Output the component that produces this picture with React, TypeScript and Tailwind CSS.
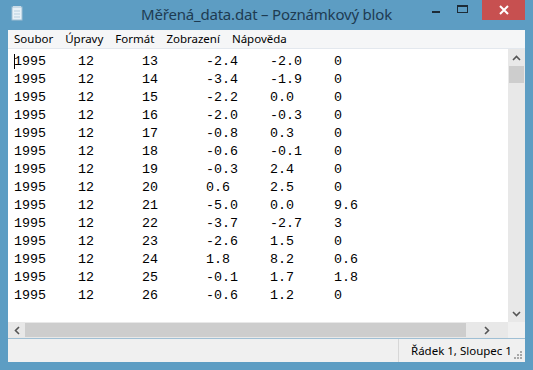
const rows = [
  ["1995", "12", "13", "-2.4", "-2.0", "0"],
  ["1995", "12", "14", "-3.4", "-1.9", "0"],
  ["1995", "12", "15", "-2.2", "0.0", "0"],
  ["1995", "12", "16", "-2.0", "-0.3", "0"],
  ["1995", "12", "17", "-0.8", "0.3", "0"],
  ["1995", "12", "18", "-0.6", "-0.1", "0"],
  ["1995", "12", "19", "-0.3", "2.4", "0"],
  ["1995", "12", "20", "0.6", "2.5", "0"],
  ["1995", "12", "21", "-5.0", "0.0", "9.6"],
  ["1995", "12", "22", "-3.7", "-2.7", "3"],
  ["1995", "12", "23", "-2.6", "1.5", "0"],
  ["1995", "12", "24", "1.8", "8.2", "0.6"],
  ["1995", "12", "25", "-0.1", "1.7", "1.8"],
  ["1995", "12", "26", "-0.6", "1.2", "0"],
];

const menu = ["Soubor", "Úpravy", "Formát", "Zobrazení", "Nápověda"];

function NotepadIcon() {
  return (
    <svg width="16" height="16" viewBox="0 0 16 16">
      <rect x="3" y="2" width="10" height="13" fill="#e8f1f7" stroke="#9fbfd4" />
      <rect x="4" y="1" width="8" height="2" fill="#c9dbe7" />
      <line x1="5" y1="6" x2="11" y2="6" stroke="#b7cfdf" />
      <line x1="5" y1="9" x2="11" y2="9" stroke="#b7cfdf" />
      <line x1="5" y1="12" x2="11" y2="12" stroke="#b7cfdf" />
    </svg>
  );
}

export default function App() {
  return (
    <div className="w-[533px] h-[370px] bg-[#5d9dc3] flex flex-col overflow-hidden font-['Noto_Sans',sans-serif]">
      {/* title bar */}
      <div className="h-[30px] flex items-start relative">
        <div className="pl-[9px] pt-[5px]">
          <NotepadIcon />
        </div>
        <div className="absolute left-0 right-0 top-[4px] text-center text-[15px] tracking-[-0.2px] text-[#1d3b52] leading-[20px]">
          Měřená_data.dat – Poznámkový blok
        </div>
        <div className="ml-auto flex items-start h-[20px]">
          <div className="w-[26px] h-[20px] flex items-center justify-center">
            <div className="w-[8px] h-[2px] bg-[#1d2b36] mt-[4px]" />
          </div>
          <div className="w-[26px] h-[20px] flex items-center justify-center">
            <div className="w-[11px] h-[8px] border border-[#1d2b36] border-t-2 -mt-[3px]" />
          </div>
          <div className="w-[43px] h-[20px] bg-[#c75050] flex items-center justify-center mr-[8px] ml-[7px]">
            <svg width="10" height="10" viewBox="0 0 10 10">
              <path d="M1 1L9 9M9 1L1 9" stroke="#fff" strokeWidth="2" />
            </svg>
          </div>
        </div>
      </div>

      {/* client */}
      <div className="mx-[8px] flex-1 flex flex-col bg-[#f0f0f0]">
        {/* menu */}
        <div className="h-[19px] bg-[#f5f6f7] border-b border-[#e3e8ee] flex items-center text-[11.5px] text-black pl-[6px] gap-[12px]">
          {menu.map((m) => (
            <span key={m}>{m}</span>
          ))}
        </div>

        {/* edit + vscroll */}
        <div className="flex flex-1 bg-white">
          <div className="flex-1 relative pt-[4px] pl-[6px] font-['Liberation_Mono',monospace] text-[13.33px] leading-[18px] text-black whitespace-pre [tab-size:8]">
            <div className="absolute left-[6px] top-[5px] w-px h-[15px] bg-black" />
            {rows.map((r, i) => (
              <div key={i}>{r.join("\t")}</div>
            ))}
          </div>
          <div className="w-[17px] bg-[#e8e8e8] flex flex-col items-center">
            <div className="h-[17px] flex items-center justify-center">
              <svg width="9" height="6" viewBox="0 0 9 6">
                <path d="M1 5L4.5 1.5L8 5" stroke="#555" strokeWidth="1.6" fill="none" />
              </svg>
            </div>
            <div className="w-[15px] h-[17px] bg-[#cdcdcd]" />
            <div className="flex-1" />
            <div className="h-[17px] flex items-center justify-center">
              <svg width="9" height="6" viewBox="0 0 9 6">
                <path d="M1 1L4.5 4.5L8 1" stroke="#555" strokeWidth="1.6" fill="none" />
              </svg>
            </div>
          </div>
        </div>

        {/* hscroll */}
        <div className="h-[16px] flex bg-[#e8e8e8]">
          <div className="w-[17px] flex items-center justify-center">
            <svg width="6" height="9" viewBox="0 0 6 9">
              <path d="M5 1L1.5 4.5L5 8" stroke="#555" strokeWidth="1.6" fill="none" />
            </svg>
          </div>
          <div className="w-[441px] my-[1px] bg-[#cdcdcd]" />
          <div className="flex-1 flex items-center justify-center">
            <svg width="6" height="9" viewBox="0 0 6 9">
              <path d="M1 1L4.5 4.5L1 8" stroke="#555" strokeWidth="1.6" fill="none" />
            </svg>
          </div>
          <div className="w-[17px] bg-[#f0f0f0]" />
        </div>

        {/* status bar */}
        <div className="h-[24px] border-t border-[#9fbfd4] bg-[#f0f0f0] flex items-center text-[11.5px] text-black">
          <div className="flex-1" />
          <div className="h-full border-l border-[#d7d7d7] w-[1px]" />
          <div className="w-[115px] pl-[12px]">Řádek 1, Sloupec 1</div>
          <div className="self-end mb-[3px] mr-[3px] grid grid-cols-3 gap-[1px] w-[8px]">
            <span />
            <span />
            <span className="w-[2px] h-[2px] bg-[#a8a8a8]" />
            <span />
            <span className="w-[2px] h-[2px] bg-[#a8a8a8]" />
            <span className="w-[2px] h-[2px] bg-[#a8a8a8]" />
            <span className="w-[2px] h-[2px] bg-[#a8a8a8]" />
            <span className="w-[2px] h-[2px] bg-[#a8a8a8]" />
            <span className="w-[2px] h-[2px] bg-[#a8a8a8]" />
          </div>
        </div>
      </div>
      <div className="h-[8px]" />
    </div>
  );
}
